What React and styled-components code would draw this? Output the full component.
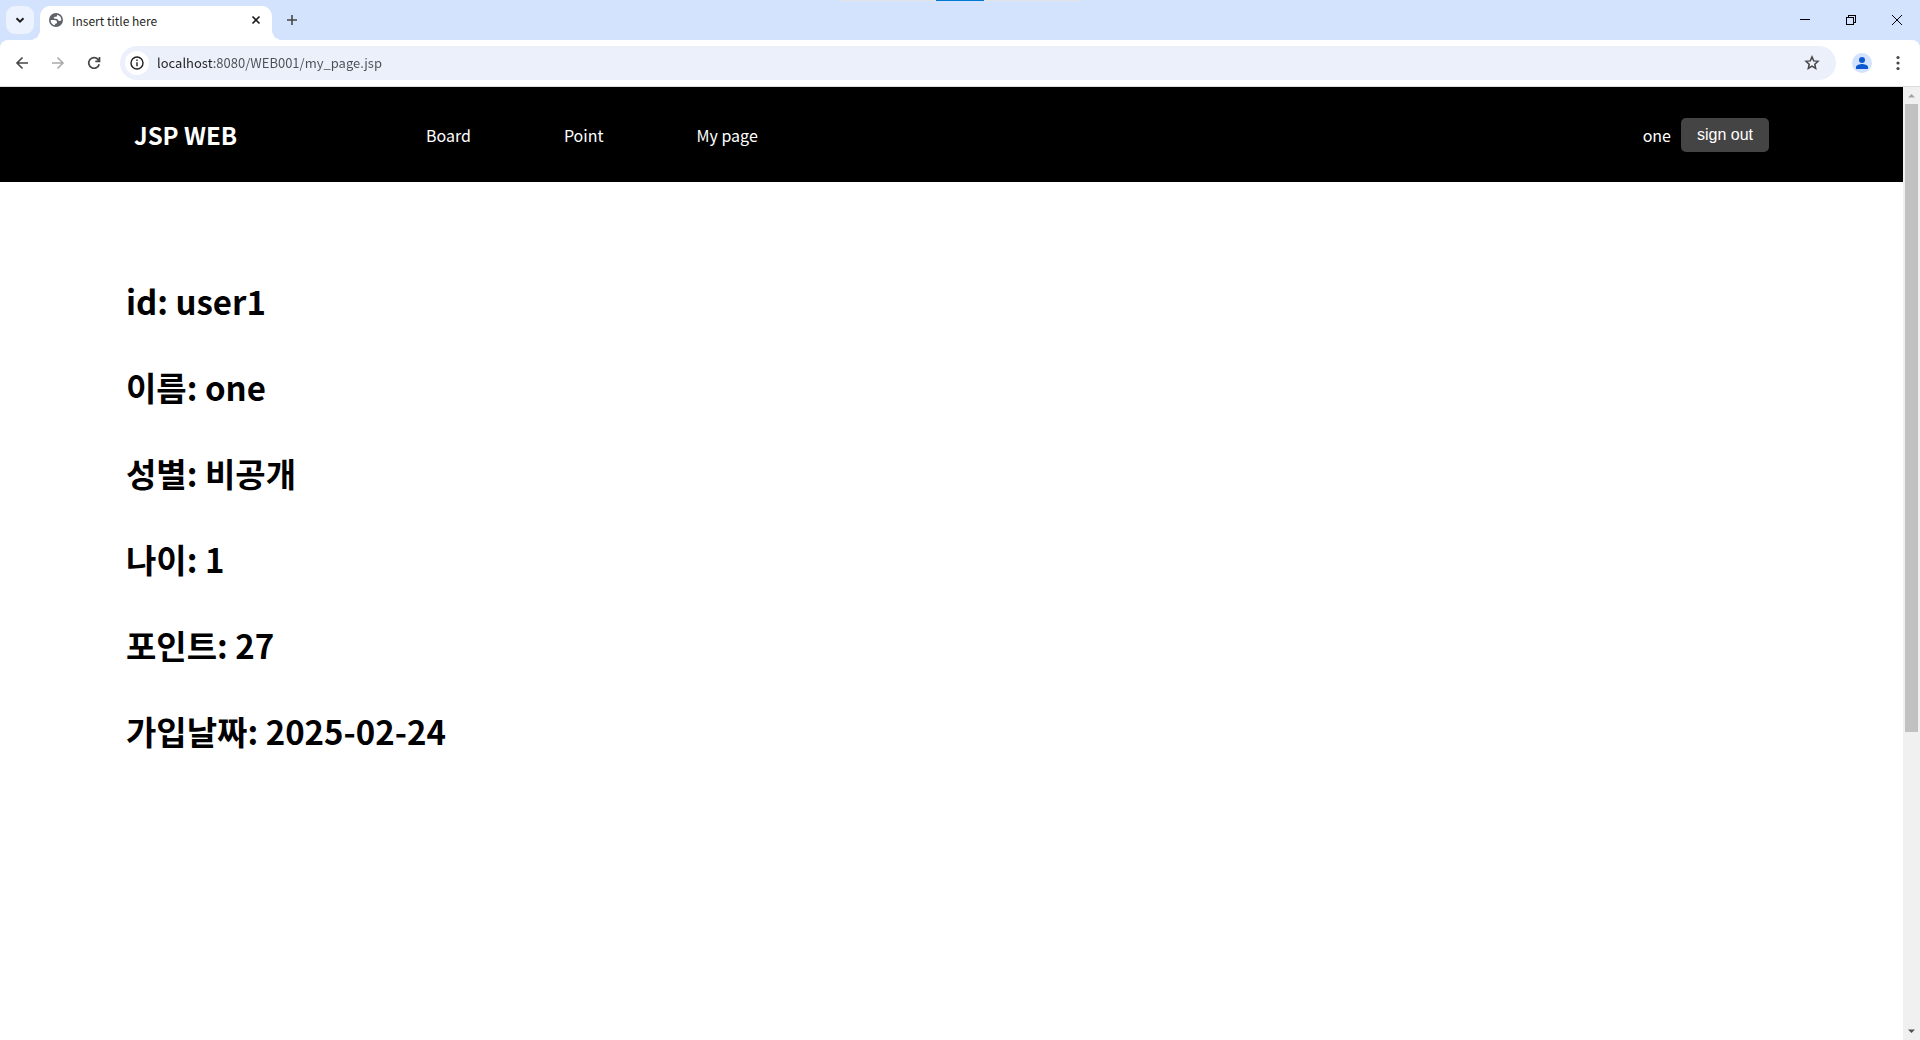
import React from "react";
import styled, { createGlobalStyle } from "styled-components";

const GlobalStyle = createGlobalStyle`
  *, *::before, *::after { box-sizing: border-box; }
  body {
    margin: 0;
    background: #fff;
    color: #000;
    font-family: "Noto Sans CJK KR", "Noto Sans", sans-serif;
    font-size: 16px;
  }
  button, input { font: inherit; color: inherit; }
`;

const Window = styled.div`
  display: flex;
  flex-direction: column;
  height: 100vh;
  overflow: hidden;
`;

const TabStrip = styled.div`
  position: relative;
  display: flex;
  flex: none;
  height: 40px;
  padding-left: 6px;
  background: #d3e3fd;
`;

const SnapHint = styled.div`
  position: absolute;
  top: 0;
  left: 50%;
  width: 240px;
  height: 1px;
  transform: translateX(-50%);
  background: linear-gradient(to right, #e3e3e3 96px, #0078d7 96px 144px, #e3e3e3 144px);
`;

const IconButton = styled.button`
  display: flex;
  flex: none;
  align-items: center;
  justify-content: center;
  width: ${(p) => p.$size || 28}px;
  height: ${(p) => p.$size || 28}px;
  padding: 0;
  border: 0;
  border-radius: ${(p) => p.$radius || "50%"};
  background: ${(p) => p.$bg || "transparent"};
  color: ${(p) => p.$color || "#474747"};
`;

const TabSearch = styled(IconButton)`
  margin-top: 6px;
`;

const Tab = styled.div`
  position: relative;
  display: flex;
  align-items: center;
  width: 232px;
  height: 34px;
  margin: 6px 6px 0;
  padding: 0 6px 6px 8px;
  border-radius: 10px 10px 0 0;
  background: #fff;
  &::before, &::after {
    content: "";
    position: absolute;
    bottom: 0;
    width: 10px;
    height: 10px;
  }
  &::before {
    left: -10px;
    background: radial-gradient(circle at 0 0, transparent 10px, #fff 10px);
  }
  &::after {
    right: -10px;
    background: radial-gradient(circle at 100% 0, transparent 10px, #fff 10px);
  }
`;

const TabTitle = styled.span`
  flex: 1;
  margin-left: 8px;
  padding-top: 2px;
  font-size: 12px;
  line-height: 16px;
  color: #1f1f1f;
`;

const NewTab = styled(IconButton)`
  margin-top: 6px;
`;

const WindowControls = styled.div`
  display: flex;
  margin-left: auto;
`;

const WindowButton = styled.button`
  display: flex;
  align-items: center;
  justify-content: center;
  width: 46px;
  height: 40px;
  padding: 0;
  border: 0;
  background: transparent;
  color: #000;
`;

const Toolbar = styled.div`
  display: flex;
  flex: none;
  align-items: center;
  height: 47px;
  padding: 0 12px 0 8px;
  border-bottom: 1px solid #dedede;
  border-radius: 8px 8px 0 0;
  background: #fff;
`;

const ToolbarBack = styled.div`
  flex: none;
  background: #d3e3fd;
`;

const NavButtons = styled.div`
  display: flex;
  gap: 8px;
  margin-right: 12px;
`;

const Omnibox = styled.label`
  display: flex;
  flex: 1;
  align-items: center;
  height: 34px;
  padding: 0 10px 0 5px;
  border-radius: 17px;
  background: #ecf0fa;
`;

const Address = styled.input`
  flex: 1;
  height: 24px;
  margin-left: 8px;
  padding: 0;
  border: 0;
  outline: 0;
  background: linear-gradient(to right, #1f1f1f 56px, #4b4f55 56px);
  background-clip: text;
  color: transparent;
  font-size: 13px;
  line-height: 24px;
`;

const Avatar = styled(IconButton)`
  margin: 0 12px 0 12px;
`;

const Viewport = styled.div`
  display: flex;
  flex: 1;
  min-height: 0;
`;

const Page = styled.div`
  flex: 1;
  min-width: 0;
  overflow: hidden;
`;

const Header = styled.header`
  display: flex;
  align-items: center;
  height: 95px;
  padding: 0 134px;
  background: #000;
  color: #fff;
`;

const Brand = styled.a`
  width: 292px;
  color: inherit;
  font-size: 24px;
  font-weight: 700;
  line-height: 32px;
  text-decoration: none;
`;

const Menu = styled.nav`
  display: flex;
  flex: 1;
  gap: 93px;
`;

const MenuLink = styled.a`
  color: inherit;
  line-height: 24px;
  text-decoration: none;
`;

const Account = styled.div`
  display: flex;
  align-items: center;
  gap: 10px;
  line-height: 24px;
`;

const SignOut = styled.button`
  height: 34px;
  padding: 0 16px;
  border: 0;
  border-radius: 5px;
  background: #444;
  color: #fff;
  font-family: "Liberation Sans", Arial, sans-serif;
  font-size: 16px;
`;

const Profile = styled.main`
  display: flex;
  flex-direction: column;
  gap: 38px;
  padding: 95px 126px;
`;

const Field = styled.h1`
  margin: 0;
  font-size: 33px;
  font-weight: 700;
  line-height: 48px;
`;

const Scrollbar = styled.div`
  display: flex;
  flex: none;
  flex-direction: column;
  width: 17px;
  background: #f0f0f0;
`;

const ScrollArrow = styled(IconButton)`
  width: 17px;
  height: 17px;
`;

const Thumb = styled.div`
  flex: 628;
  margin: 0 2px;
  background: #c1c1c1;
`;

const TrackRest = styled.div`
  flex: 291;
`;

const Svg = ({ size = 20, box = size, children, ...rest }) => (
  <svg width={size} height={size} viewBox={`0 0 ${box} ${box}`} fill="none" stroke="currentColor" aria-hidden="true" {...rest}>
    {children}
  </svg>
);

const fields = [
  ["id", "user1"],
  ["이름", "one"],
  ["성별", "비공개"],
  ["나이", "1"],
  ["포인트", "27"],
  ["가입날짜", "2025-02-24"],
];

export default function App() {
  return (
    <Window>
      <GlobalStyle />
      <TabStrip>
        <SnapHint />
        <TabSearch $bg="#ecf2fe" $radius="9px" $color="#1f1f1f" aria-label="Search tabs">
          <Svg size={10} strokeWidth="2"><path d="M1.5 3.2 5 6.7l3.5-3.5" /></Svg>
        </TabSearch>
        <Tab>
          <Svg size={16} box={24} stroke="none" fill="#5f6368">
            <path fillRule="evenodd" d="M12 1.500a10.500 10.500 0 1 0 0 21 10.500 10.500 0 0 0 0-21zM4 12h5.500c2.500 0 4 1 4 3.200 0 1.500-1.500 2.300-3 2.300v2.400C6.500 19.500 3.800 16 4 12zM13.500 4.200c4 .8 6.700 4 6.500 8-1 1.200-2.500 1.500-4 .8-1.200-.6-1.200-2-2.500-2.500-1.500-.5-3.500.2-4.500-1-1-1.300.2-2.500 1.500-2.500h2c1-.1 1.200-1.200 1-2.800z" />
          </Svg>
          <TabTitle>Insert title here</TabTitle>
          <IconButton $size={20} $color="#1f1f1f" aria-label="Close tab">
            <Svg size={10} strokeWidth="1.600"><path d="m1.500 1.500 7 7m0-7-7 7" /></Svg>
          </IconButton>
        </Tab>
        <NewTab aria-label="New tab">
          <Svg size={12} strokeWidth="1.600"><path d="M6 1v10M1 6h10" /></Svg>
        </NewTab>
        <WindowControls>
          <WindowButton aria-label="Minimize">
            <Svg size={10} shapeRendering="crispEdges"><path d="M0 4.500h10" /></Svg>
          </WindowButton>
          <WindowButton aria-label="Restore">
            <Svg size={10} shapeRendering="crispEdges"><path d="M.5 2.500h7v7h-7zM2.500 2.500v-2h7v7h-2" /></Svg>
          </WindowButton>
          <WindowButton aria-label="Close">
            <Svg size={10}><path d="m0 0 10 10m0-10L0 10" /></Svg>
          </WindowButton>
        </WindowControls>
      </TabStrip>
      <ToolbarBack>
        <Toolbar>
          <NavButtons>
            <IconButton aria-label="Back">
              <Svg size={14} strokeWidth="1.600"><path d="M13 7H2m5.500-5.500L2 7l5.500 5.500" /></Svg>
            </IconButton>
            <IconButton $color="#ababab" aria-label="Forward">
              <Svg size={14} strokeWidth="1.600"><path d="M1 7h11M6.500 1.500 12 7l-5.500 5.500" /></Svg>
            </IconButton>
            <IconButton aria-label="Reload">
              <Svg size={14} strokeWidth="1.700"><path d="M12.200 8.200A5.300 5.300 0 1 1 11 3.400l1 1.100M12.500 1v4.300H8.300" /></Svg>
            </IconButton>
          </NavButtons>
          <Omnibox>
            <IconButton $size={24} $bg="#fff" $color="#1f1f1f" aria-label="View site information">
              <Svg size={14} strokeWidth="1.400"><circle cx="7" cy="7" r="6" /><path d="M7 6.200v4M7 3.600v1.500" /></Svg>
            </IconButton>
            <Address defaultValue="localhost:8080/WEB001/my_page.jsp" aria-label="Address" spellCheck={false} />
            <IconButton aria-label="Bookmark this tab">
              <Svg size={16} strokeWidth="1.500"><path d="m8 1.900 1.700 4 4.300.4-3.200 2.900.9 4.300L8 11.200l-3.700 2.300.9-4.300L2 6.300l4.300-.4z" /></Svg>
            </IconButton>
          </Omnibox>
          <Avatar aria-label="Profile">
            <Svg size={20} stroke="none">
              <circle cx="10" cy="10" r="10" fill="#d3e3fd" />
              <circle cx="10" cy="7" r="3" fill="#0b57d0" />
              <path fill="#0b57d0" d="M4 16v-2c0-2 4-3 6-3s6 1 6 3v2z" />
            </Svg>
          </Avatar>
          <IconButton $size={20} aria-label="Menu">
            <Svg size={16} stroke="none" fill="currentColor"><circle cx="8" cy="2.500" r="1.600" /><circle cx="8" cy="8" r="1.600" /><circle cx="8" cy="13.500" r="1.600" /></Svg>
          </IconButton>
        </Toolbar>
      </ToolbarBack>
      <Viewport>
        <Page>
          <Header>
            <Brand href="#">JSP WEB</Brand>
            <Menu>
              <MenuLink href="#board">Board</MenuLink>
              <MenuLink href="#point">Point</MenuLink>
              <MenuLink href="#my-page">My page</MenuLink>
            </Menu>
            <Account>
              <span>one</span>
              <SignOut>sign out</SignOut>
            </Account>
          </Header>
          <Profile>
            {fields.map(([label, value]) => (
              <Field key={label}>{label}: {value}</Field>
            ))}
          </Profile>
        </Page>
        <Scrollbar>
          <ScrollArrow $color="#a3a3a3" aria-label="Scroll up">
            <Svg size={7} stroke="none" fill="currentColor"><path d="M0 5.500h7L3.500 2z" /></Svg>
          </ScrollArrow>
          <Thumb />
          <TrackRest />
          <ScrollArrow $color="#505050" aria-label="Scroll down">
            <Svg size={7} stroke="none" fill="currentColor"><path d="M0 1.500h7L3.500 5z" /></Svg>
          </ScrollArrow>
        </Scrollbar>
      </Viewport>
    </Window>
  );
}
